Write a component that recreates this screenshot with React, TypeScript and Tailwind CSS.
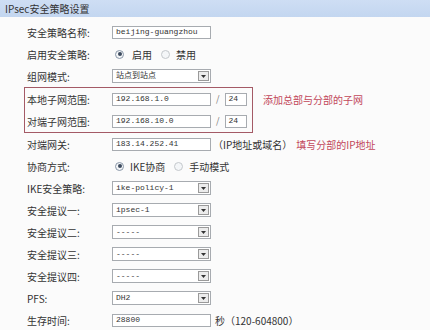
import React from "react";

const cjk = { fontFamily: '"Noto Sans CJK SC", "Noto Sans", sans-serif' };
const mono = { fontFamily: '"Liberation Mono", "Noto Sans CJK SC", monospace' };

function Input({ value, w = "w-[99px]" }: { value: string; w?: string }) {
  return (
    <div
      className={`${w} h-[13px] border border-[#a7abb0] bg-white flex items-center pl-[3px] text-[8px] text-[#333] leading-none`}
      style={mono}
    >
      {value}
    </div>
  );
}

function Select({ value }: { value: string }) {
  return (
    <div
      className="w-[99px] h-[14px] border border-[#a7abb0] bg-white flex items-center justify-between pl-[3px] pr-[1px] text-[8px] text-[#333] leading-none"
      style={mono}
    >
      <span>{value}</span>
      <div className="w-[11px] h-[10px] border border-[#9a9a9a] bg-[#ececec] flex items-center justify-center">
        <svg width="5" height="3" viewBox="0 0 5 3">
          <path d="M0 0 L5 0 L2.5 3 Z" fill="#333" />
        </svg>
      </div>
    </div>
  );
}

function Radio({ on }: { on: boolean }) {
  return (
    <div
      className={`w-[9px] h-[9px] rounded-full border ${on ? "border-[#8a97a8]" : "border-[#c4c8cc]"} bg-[#f4f6f8] flex items-center justify-center`}
    >
      {on && <div className="w-[4px] h-[4px] rounded-full bg-[#3b4a5e]" />}
    </div>
  );
}

function Row({ label, children, inner }: { label: string; children: React.ReactNode; inner?: boolean }) {
  return (
    <div className={`h-[22px] flex items-center ${inner ? "pl-[2px]" : "pl-[27px]"}`}>
      <div className="w-[85px] text-[10px] text-[#333]" style={cjk}>
        {label}
      </div>
      <div className="flex items-center">{children}</div>
    </div>
  );
}

export default function App() {
  return (
    <div className="w-[430px] h-[330px] bg-[#fbfbfb] overflow-hidden" style={cjk}>
      <div className="h-[17px] bg-gradient-to-b from-[#cedef4] to-[#c3d6f0] flex items-center pl-[5px] text-[10px] text-[#333]">
        IPsec安全策略设置
      </div>
      <div className="pt-[4px]">
        <Row label="安全策略名称:">
          <Input value="beijing-guangzhou" />
        </Row>
        <Row label="启用安全策略:">
          <div className="flex items-center text-[10px] text-[#333] pl-[3px]">
            <Radio on />
            <span className="ml-[8px]">启用</span>
            <div className="ml-[9px]"><Radio on={false} /></div>
            <span className="ml-[6px]">禁用</span>
          </div>
        </Row>
        <Row label="组网模式:">
          <Select value="站点到站点" />
        </Row>
        <div className="flex">
          <div className="ml-[24px] w-[229px] border border-[#a45a66]">
            <Row label="本地子网范围:" inner>
              <Input value="192.168.1.0" />
              <span className="mx-[5px] text-[9px] text-[#777]">/</span>
              <Input value="24" w="w-[22px]" />
            </Row>
            <Row label="对端子网范围:" inner>
              <Input value="192.168.10.0" />
              <span className="mx-[5px] text-[9px] text-[#777]">/</span>
              <Input value="24" w="w-[22px]" />
            </Row>
          </div>
          <div className="pl-[10px] pt-[1px]">
            <div className="h-[22px] flex items-center text-[10px] text-[#c2475a]">添加总部与分部的子网</div>
          </div>
        </div>
        <Row label="对端网关:">
          <Input value="183.14.252.41" />
          <span className="ml-[2px] text-[10px] text-[#333]">（IP地址或域名）</span>
          <span className="ml-[4px] text-[10px] text-[#c2475a]">填写分部的IP地址</span>
        </Row>
        <Row label="协商方式:">
          <div className="flex items-center text-[10px] text-[#333] pl-[3px]">
            <Radio on />
            <span className="ml-[6px]">IKE协商</span>
            <div className="ml-[9px]"><Radio on={false} /></div>
            <span className="ml-[6px]">手动模式</span>
          </div>
        </Row>
        <Row label="IKE安全策略:">
          <Select value="ike-policy-1" />
        </Row>
        <Row label="安全提议一:">
          <Select value="ipsec-1" />
        </Row>
        <Row label="安全提议二:">
          <Select value="-----" />
        </Row>
        <Row label="安全提议三:">
          <Select value="-----" />
        </Row>
        <Row label="安全提议四:">
          <Select value="-----" />
        </Row>
        <Row label="PFS:">
          <Select value="DH2" />
        </Row>
        <Row label="生存时间:">
          <Input value="28800" />
          <span className="ml-[4px] text-[10px] text-[#333]">秒（120-604800）</span>
        </Row>
      </div>
    </div>
  );
}
